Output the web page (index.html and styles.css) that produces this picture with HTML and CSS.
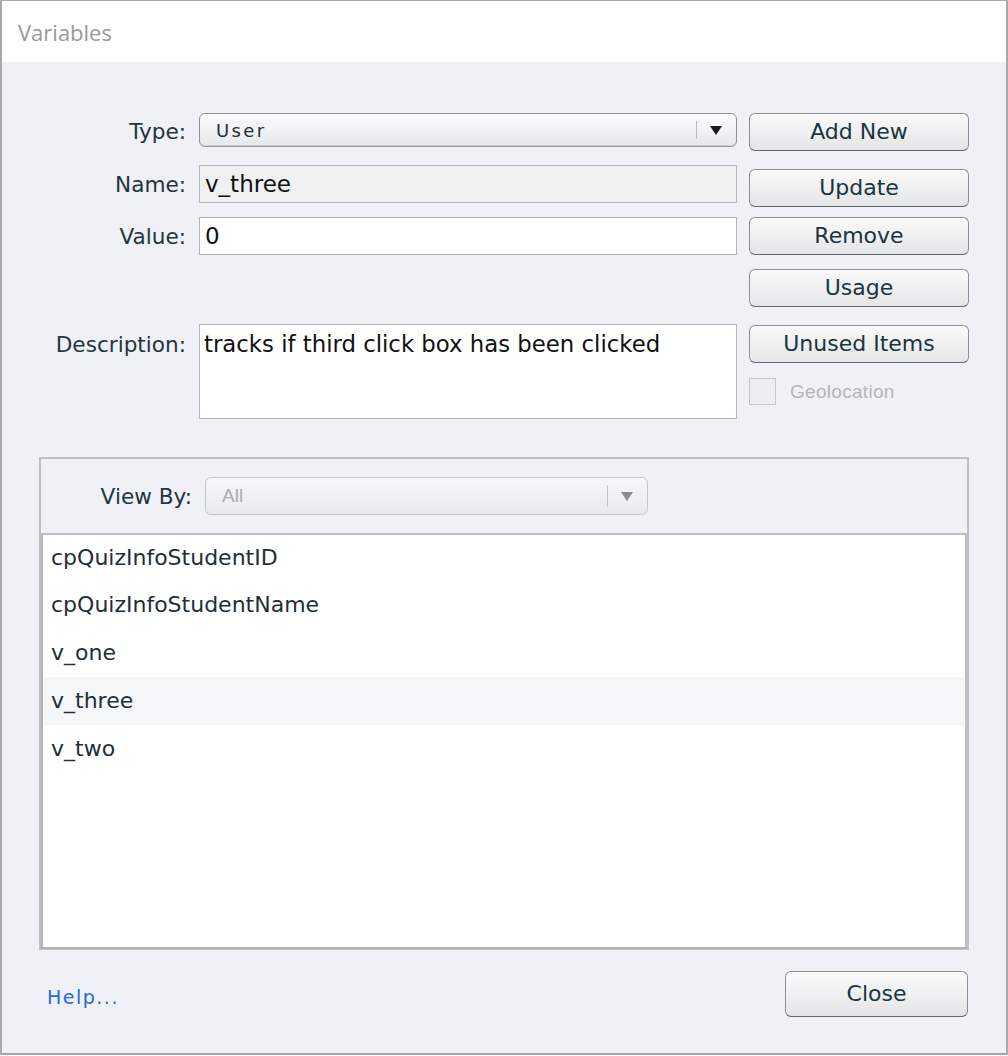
FILE: index.html
```html
<!DOCTYPE html>
<html>
<head>
<meta charset="utf-8">
<link rel="stylesheet" href="styles.css">
</head>
<body>
<div class="window">
  <div class="titlebar">Variables</div>
  <div class="content">
    <div class="form">
      <div class="fields">
        <div class="row row-type">
          <label class="lbl lbl-type">Type:</label>
          <div class="select">
            <span class="select-text">User</span>
            <span class="select-div"></span>
            <span class="select-arrow"></span>
          </div>
        </div>
        <div class="row row-name">
          <label class="lbl">Name:</label>
          <div class="input input-ro">v_three</div>
        </div>
        <div class="row row-value">
          <label class="lbl">Value:</label>
          <div class="input">0</div>
        </div>
        <div class="row row-desc">
          <label class="lbl lbl-desc">Description:</label>
          <div class="textarea">tracks if third click box has been clicked</div>
        </div>
      </div>
      <div class="buttons">
        <button class="btn b-add">Add New</button>
        <button class="btn b-update">Update</button>
        <button class="btn b-remove">Remove</button>
        <button class="btn b-usage">Usage</button>
        <button class="btn b-unused">Unused Items</button>
        <div class="geo"><span class="check"></span><span class="geo-text">Geolocation</span></div>
      </div>
    </div>

    <div class="panel">
      <div class="panel-head">
        <label class="lbl lbl-view">View By:</label>
        <div class="select select-dis">
          <span class="select-text">All</span>
          <span class="select-div"></span>
          <span class="select-arrow"></span>
        </div>
      </div>
      <div class="list">
        <div class="item">cpQuizInfoStudentID</div>
        <div class="item">cpQuizInfoStudentName</div>
        <div class="item">v_one</div>
        <div class="item selected">v_three</div>
        <div class="item">v_two</div>
      </div>
    </div>

    <div class="footer">
      <a class="help">Help...</a>
      <button class="btn b-close">Close</button>
    </div>
  </div>
</div>
</body>
</html>
```
FILE: styles.css
```css
* { box-sizing: border-box; }
html, body { margin: 0; padding: 0; background: #ffffff; }
body { width: 1008px; height: 1056px; overflow: hidden; }

.window {
  width: 1008px;
  height: 1055px;
  border-top: 1px solid #a9a9a9;
  border-left: 2px solid #a9a9a9;
  border-right: 2px solid #a9a9a9;
  border-bottom: 2px solid #a9a9a9;
  display: flex;
  flex-direction: column;
  font-family: "DejaVu Sans", sans-serif;
}

.titlebar {
  height: 61px;
  background: #ffffff;
  color: #9a9a9a;
  font-family: "Open Sans", "Noto Sans", sans-serif;
  font-size: 22px;
  padding-left: 16px;
  line-height: 62px;
  flex: none;
}

.content {
  flex: 1;
  background: #f0f1f6;
  padding: 51px 0 0 0;
  display: flex;
  flex-direction: column;
}

.form {
  display: flex;
}

.fields {
  width: 735px;
  display: flex;
  flex-direction: column;
}

.row {
  display: flex;
  align-items: center;
}

.lbl {
  width: 184px;
  text-align: right;
  margin-right: 13px;
  color: #233540;
  font-family: "DejaVu Sans", sans-serif;
  font-size: 21.6px;
  flex: none;
  white-space: nowrap;
}
.lbl-type { margin-top: 3px; }

.row-name { margin-top: 18px; }
.row-value { margin-top: 14px; }
.row-desc { margin-top: 69px; align-items: flex-start; }
.lbl-desc { margin-top: 8px; }

.select {
  width: 538px;
  height: 34px;
  border: 1px solid #8e9499;
  border-radius: 6px;
  background: linear-gradient(#fbfbfc, #e6e7ea);
  display: flex;
  align-items: center;
  box-shadow: inset 0 -1px 0 #cfd1d4;
}
.select-text {
  flex: 1;
  padding-left: 16px;
  font-size: 18px;
  color: #1d2e38;
  letter-spacing: 2.4px;
}
.select-div {
  width: 1px;
  height: 18px;
  background: #b9bcc0;
}
.select-arrow {
  width: 0; height: 0;
  border-left: 6px solid transparent;
  border-right: 6px solid transparent;
  border-top: 9px solid #1b1b1b;
  margin: 0 14px 0 13px;
}

.input {
  width: 538px;
  height: 38px;
  border: 1px solid #b4b5b8;
  background: #ffffff;
  font-family: "DejaVu Sans", sans-serif;
  font-size: 23px;
  color: #111;
  padding-left: 5px;
  line-height: 36px;
  white-space: nowrap;
}
.input-ro { background: #f0f0f0; }

.textarea {
  width: 538px;
  height: 95px;
  border: 1px solid #b4b5b8;
  background: #ffffff;
  font-family: "DejaVu Sans", sans-serif;
  font-size: 22.8px;
  color: #111;
  padding: 6px 0 0 4px;
  white-space: nowrap;
}

.buttons {
  margin-left: 12px;
  width: 220px;
  display: flex;
  flex-direction: column;
}

.btn {
  width: 220px;
  height: 38px;
  border: 1px solid #8b9096;
  border-bottom-color: #62676c;
  border-radius: 6px;
  background: linear-gradient(#fafafa, #e4e5e8);
  font-family: "DejaVu Sans", sans-serif;
  font-size: 22px;
  color: #1a3540;
  padding: 0 0 2px 0;
  box-shadow: inset 0 1px 0 #ffffff;
  white-space: nowrap;
}
.b-update { margin-top: 18px; }
.b-remove { margin-top: 10px; }
.b-usage { margin-top: 14px; }
.b-unused { margin-top: 18px; }

.geo {
  margin-top: 15px;
  display: flex;
  align-items: center;
}
.check {
  width: 27px;
  height: 27px;
  border: 1px solid #c6c7ca;
  background: #eceef2;
}
.geo-text {
  margin-left: 14px;
  font-family: "Liberation Sans", sans-serif;
  font-size: 19px;
  letter-spacing: 0.3px;
  color: #b4b6ba;
}

.panel {
  margin: 38px 0 0 37px;
  width: 930px;
  height: 493px;
  border: 2px solid #c0c0c2;
  display: flex;
  flex-direction: column;
}

.panel-head {
  height: 74px;
  display: flex;
  align-items: center;
}
.lbl-view {
  width: 151px;
  margin-right: 13px;
}
.select-dis {
  width: 443px;
  height: 38px;
  border-color: #c5c7cb;
  background: linear-gradient(#f6f7f9, #e9eaee);
  box-shadow: none;
}
.select-dis .select-text {
  color: #a9abaf;
  padding-left: 16px;
  font-family: "Liberation Sans", sans-serif;
  font-size: 19px;
  letter-spacing: 0;
}
.select-dis .select-div { height: 22px; background: #c2c4c8; }
.select-dis .select-arrow { border-top-color: #888c90; margin: 0 14px 0 13px; }

.list {
  flex: 1;
  background: #ffffff;
  border-top: 2px solid #c0c0c2;
  border-left: 2px solid #b3b3b5;
  border-bottom: 2px solid #b3b3b5;
  border-right: 2px solid #c0c0c2;
  margin-bottom: -1px;
}
.item {
  height: 48px;
  line-height: 48px;
  padding-left: 8px;
  font-family: "DejaVu Sans", sans-serif;
  font-size: 22px;
  color: #1f2f38;
  white-space: nowrap;
}
.item:first-child { height: 46px; line-height: 46px; }
.item.selected { background: #f5f6f8; }

.footer {
  display: flex;
  align-items: center;
  justify-content: space-between;
  padding: 0 38px 0 45px;
  margin-top: 21px;
}
.help {
  color: #2769d8;
  font-family: "DejaVu Sans", sans-serif;
  font-size: 19px;
  letter-spacing: 1.5px;
  margin-top: 6px;
}
.b-close {
  width: 183px;
  height: 46px;
}
```
